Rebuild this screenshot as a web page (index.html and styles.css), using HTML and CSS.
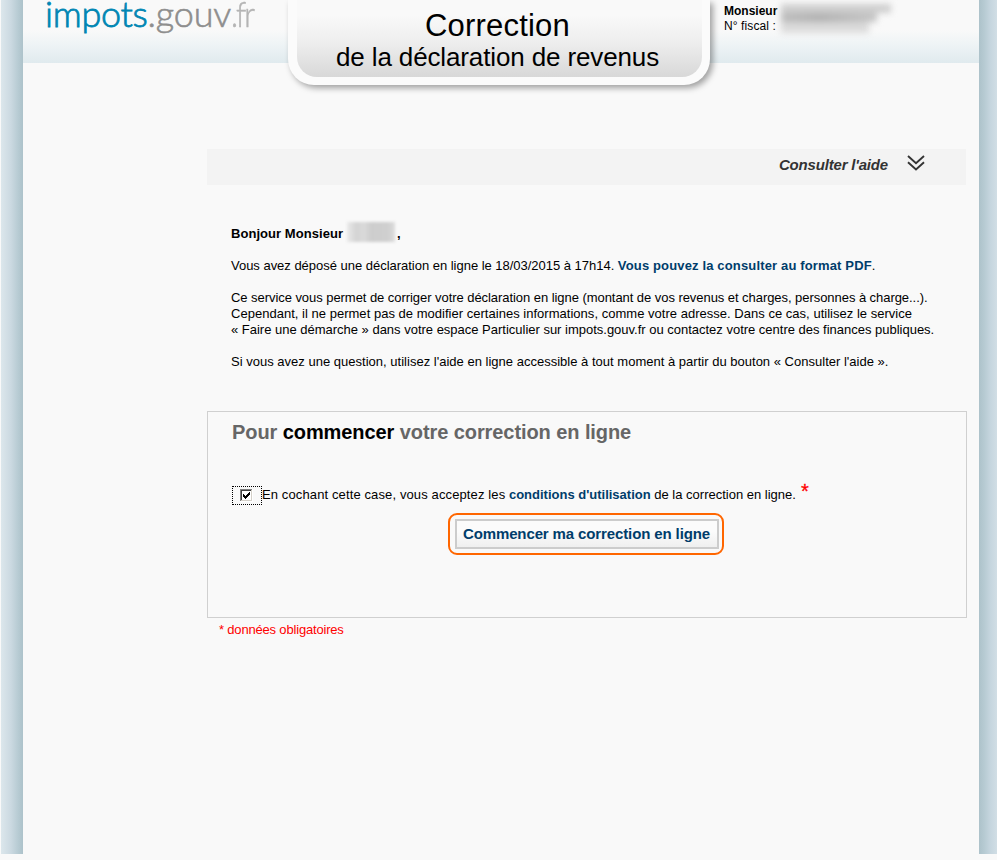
FILE: index.html
```html
<!DOCTYPE html>
<html lang="fr">
<head>
<meta charset="utf-8">
<title>Correction de la déclaration de revenus</title>
<link rel="stylesheet" href="styles.css">
</head>
<body>
<div class="frame">
  <div class="side side-left"></div>
  <div class="page">
    <header class="header">
      <div class="logo"><span class="logo-name">impots</span><span class="logo-gouv">.gouv</span><span class="logo-fr">.fr</span></div>
      <div class="banner">
        <h1 class="banner-inner">
          <span class="banner-title">Correction</span>
          <span class="banner-sub">de la déclaration de revenus</span>
        </h1>
      </div>
      <div class="user">
        <div class="user-labels">
          <strong class="user-name">Monsieur</strong>
          <span class="user-tax">N° fiscal :</span>
        </div>
        <div class="user-masked"><i class="mask-line mask-a"></i><i class="mask-line mask-b"></i><i class="mask-line mask-c"></i></div>
      </div>
    </header>
    <main class="content">
      <div class="help">
        <span class="help-label">Consulter l'aide</span>
        <svg class="help-icon" width="18" height="16" viewBox="0 0 18 16"><path d="M1 1l8 7.2L17 1M1 7.2l8 7.2 8-7.2" fill="none" stroke="#333" stroke-width="1.9"/></svg>
      </div>
      <section class="intro">
        <p class="hello"><strong>Bonjour Monsieur</strong><i class="mask-name"></i><strong>,</strong></p>
        <p><span class="deposit">Vous avez déposé une déclaration en ligne le 18/03/2015 à 17h14. </span><a class="link link-pdf">Vous pouvez la consulter au format PDF</a>.</p>
        <p><span class="line-a">Ce service vous permet de corriger votre déclaration en ligne (montant de vos revenus et charges, personnes à charge...).</span><br><span class="line-b">Cependant, il ne permet pas de modifier certaines informations, comme votre adresse. Dans ce cas, utilisez le service</span><br><span class="line-c">« Faire une démarche » dans votre espace Particulier sur impots.gouv.fr ou contactez votre centre des finances publiques.</span></p>
        <p class="line-d">Si vous avez une question, utilisez l'aide en ligne accessible à tout moment à partir du bouton « Consulter l'aide ».</p>
      </section>
      <section class="start">
        <h2 class="start-title">Pour <b>commencer</b> votre correction en ligne</h2>
        <div class="accept">
          <span class="check-focus"><svg class="check" width="13" height="13" viewBox="0 0 13 13" shape-rendering="crispEdges"><path fill="#fff" d="M0 0h13v13H0z"/><path fill="#808080" d="M0 0h12v1H1v11H0z"/><path fill="#404040" d="M1 1h10v1H2v9H1z"/><path fill="#d4d0c8" d="M11 1h1v11H1v-1h10z"/><path fill="#000" d="M3 5h1v3H3zM4 6h1v3H4zM5 7h1v3H5zM6 6h1v3H6zM7 5h1v3H7zM8 4h1v3H8zM9 3h1v3H9z"/></svg></span>
          <span class="accept-text"><span class="accept-lead">En cochant cette case, vous acceptez les</span> <a class="link">conditions d'utilisation</a> de la correction en ligne.</span>
          <span class="star">*</span>
        </div>
        <div class="action"><button class="action-button" type="button">Commencer ma correction en ligne</button></div>
      </section>
      <p class="required">* données obligatoires</p>
    </main>
  </div>
  <div class="side side-right"></div>
</div>
</body>
</html>
```
FILE: styles.css
```css
* { box-sizing: border-box; }
body {
  margin: 0;
  background: #f9f9f9;
  color: #000;
  font: 13px/16px "Liberation Sans", Arial, sans-serif;
  overflow: hidden;
}
p, h1, h2 { margin: 0; font-weight: 400; }

.frame {
  display: grid;
  grid-template-columns: 22px 956px 18px;
  height: 854px;
  padding-left: 1px;
}
.side-left { background: linear-gradient(90deg, #dce7ec, #cbd9e1 45%, #b7cbd3 78%, #adc2ca); }
.side-right { background: linear-gradient(90deg, #adc2ca, #b7cbd3 30%, #c5d5de 62%, #d1dee5); }

.header {
  display: grid;
  grid-template-columns: 265px 422px 1fr;
  height: 63px;
  background: linear-gradient(#f9f9f9 30px, #edf3f5 46px, #e0eaee);
}
.logo {
  padding-left: 22px;
  font: 300 36px/27px Lato, sans-serif;
  white-space: nowrap;
}
.logo-name { color: #0086b3; letter-spacing: -0.3px; -webkit-text-stroke: 0.8px #0086b3; }
.logo-gouv { color: #8e8e8e; letter-spacing: -0.15px; -webkit-text-stroke: 0.6px #8e8e8e; }
.logo-fr {
  display: inline-block;
  color: #b4b4b4;
  letter-spacing: -2.4px;
  transform: scaleX(.84);
  transform-origin: left;
  -webkit-text-stroke: 0.5px #b4b4b4;
}

.banner {
  height: 85px;
  padding: 0 8px 8px 9px;
  background: #fbfbfb;
  border-radius: 0 0 26px 26px;
  box-shadow: 3px 3px 6px rgba(0, 0, 0, .36);
}
.banner-inner {
  display: flex;
  flex-direction: column;
  align-items: center;
  height: 77px;
  padding-top: 8px;
  border-radius: 0 0 20px 20px;
  background: linear-gradient(#f9f9f9 15px, #eee 42px, #d8d8d8);
}
.banner-title { font-size: 31px; line-height: 36px; letter-spacing: .2px; padding-right: 4px; }
.banner-sub { font-size: 26px; line-height: 28px; margin-top: -1px; letter-spacing: -.13px; padding-right: 4px; }

.user { display: flex; padding: 4px 0 0 14px; }
.user-labels { display: flex; flex-direction: column; width: 54px; font-size: 12px; line-height: 15px; white-space: nowrap; }
.user-tax { letter-spacing: .1px; }
.user-masked { filter: blur(3px); }
.mask-line { display: block; margin-left: 3px; }
.mask-a { width: 110px; height: 9px; background: #cecece; }
.mask-b { width: 96px; height: 9px; background: linear-gradient(90deg, #bdbdbd, #b2b2b2 40%, #c6c6c6); }
.mask-c { width: 88px; height: 11px; background: #dadada; }

.content { width: 760px; margin: 86px 0 0 184px; }
.help {
  display: flex;
  justify-content: flex-end;
  height: 36px;
  padding: 6px 41px 0 0;
  margin-right: 1px;
  background: #f3f3f3;
}
.help-label { margin: 1px 19px 0 0; color: #333; font: italic 700 15px/18px "Liberation Sans", Arial, sans-serif; letter-spacing: -.18px; }

.intro { padding: 41px 0 0 24px; white-space: nowrap; }
.intro p { margin-bottom: 16px; }
.hello { display: flex; letter-spacing: .05px; }
.mask-name {
  width: 48px;
  height: 20px;
  margin: -4px 2px -4px 4px;
  background: linear-gradient(90deg, #e9e9e9, #d3d3d3 20%, #dadada 35%, #cdcdcd 50%, #cfcfcf 85%, #ddd);
  filter: blur(1.5px);
}
.link { color: #003d6b; font-weight: 700; }
.link-pdf { letter-spacing: .15px; }
.deposit { letter-spacing: -.02px; }
.line-a { letter-spacing: -.054px; }
.line-b { letter-spacing: .022px; }
.line-c { letter-spacing: -.009px; }
.line-d { letter-spacing: .012px; }

.start {
  height: 207px;
  margin-top: 41px;
  padding: 8px 24px 0;
  border: 1px solid #d0d0d0;
}
.start-title { color: #666; font-size: 20px; line-height: 25px; font-weight: 700; letter-spacing: -.08px; }
.start-title b { color: #000; }
.accept { display: flex; height: 20px; margin-top: 41px; white-space: nowrap; }
.check-focus { width: 30px; height: 19px; border: 1px dotted #000; padding: 2px 0 0 7px; }
.check { display: block; }
.accept-text { line-height: 17px; }
.accept-lead { letter-spacing: .12px; }
.star { margin: -5px 0 0 5px; color: #f00; font-size: 20px; line-height: 20px; -webkit-text-stroke: .3px #f00; }

.action {
  width: 276px;
  height: 42px;
  margin: 7px 0 0 216px;
  padding: 4px 3px 4px 5px;
  border: 2px solid #f60;
  border-radius: 9px;
}
.action-button {
  display: block;
  width: 264px;
  height: 30px;
  padding: 0 1px 0 0;
  border: 2px solid #ccc;
  background: linear-gradient(#fbfbfb 40%, #efefef);
  color: #003d6b;
  font: 700 15px/24px "Liberation Sans", Arial, sans-serif;
  letter-spacing: -.12px;
}
.required { margin: 4px 0 0 12px; color: #f00; letter-spacing: -.18px; }
```
